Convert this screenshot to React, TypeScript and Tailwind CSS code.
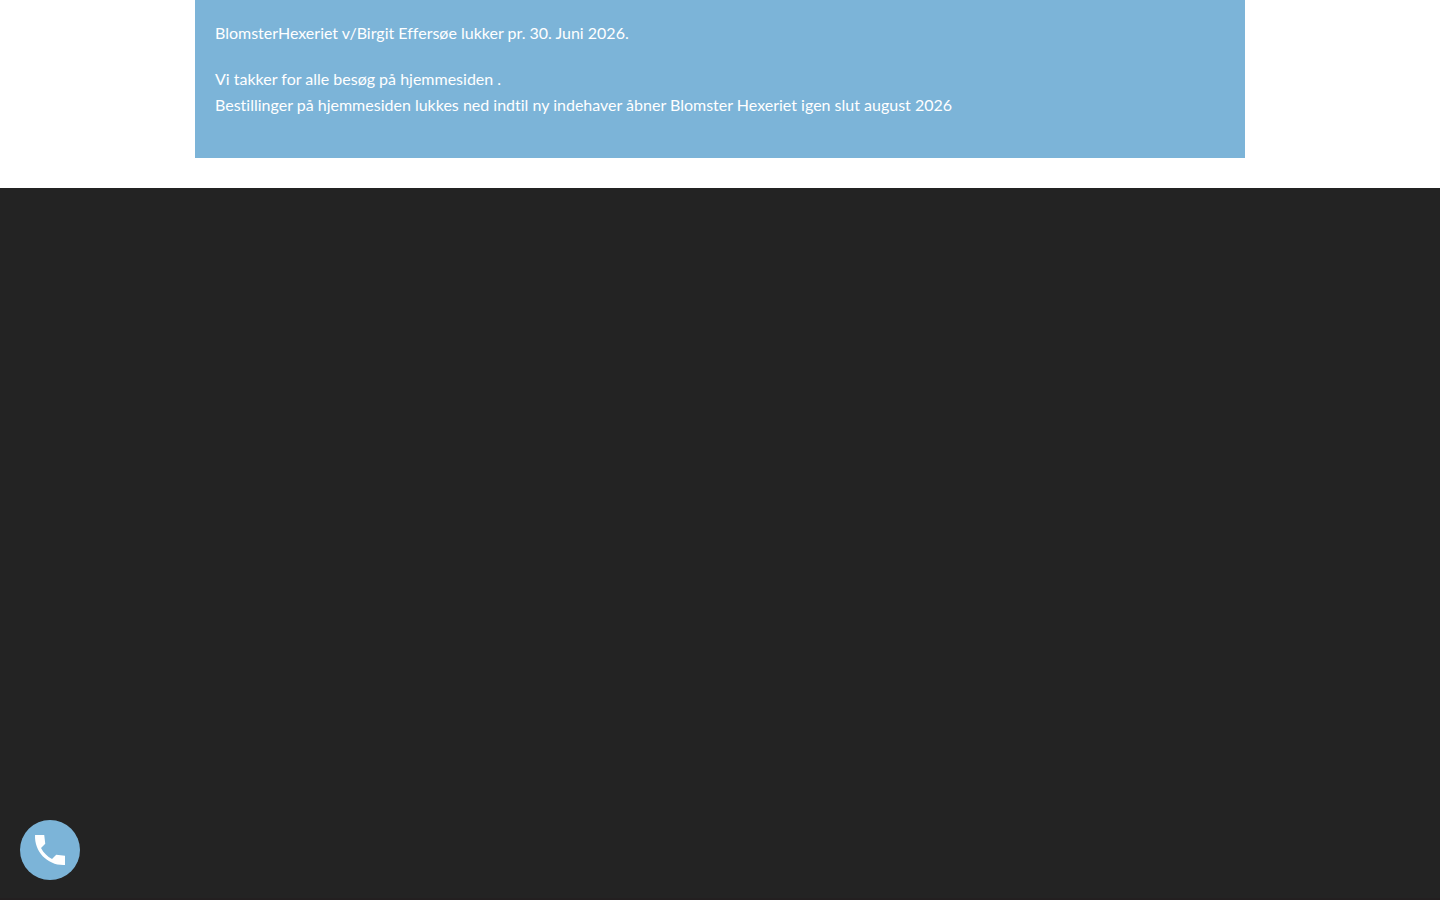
export default function App() {
  return (
    <div className="flex min-h-screen flex-col bg-[#232323] font-['Lato',sans-serif]">
      <main className="bg-white pb-[30px]">
        <section className="mx-auto max-w-[1050px] space-y-5 bg-[#7cb4d8] px-5 pt-5 pb-10 text-base leading-[26px] text-white [font-variant-ligatures:no-common-ligatures]">
          <p>BlomsterHexeriet v/Birgit Effersøe lukker pr. 30. Juni 2026.</p>
          <p>
            Vi takker for alle besøg på hjemmesiden .<br />
            Bestillinger på hjemmesiden lukkes ned indtil ny indehaver åbner Blomster Hexeriet igen slut august 2026
          </p>
        </section>
      </main>
      <footer className="flex-1 border-b-2 border-[#231f20]" />
      <a
        href="tel:"
        aria-label="Ring til os"
        className="fixed bottom-5 left-5 flex size-[60px] items-center justify-center rounded-full bg-[#7cb4d8] text-white"
      >
        <svg viewBox="0 0 24 24" className="size-10" fill="currentColor" aria-hidden="true">
          <path d="M21 15.46l-5.27-.61-2.52 2.52c-2.83-1.44-5.15-3.75-6.59-6.59l2.53-2.53L8.54 3H3.03C2.45 13.18 10.82 21.55 21 20.97v-5.51z" />
        </svg>
      </a>
    </div>
  );
}
